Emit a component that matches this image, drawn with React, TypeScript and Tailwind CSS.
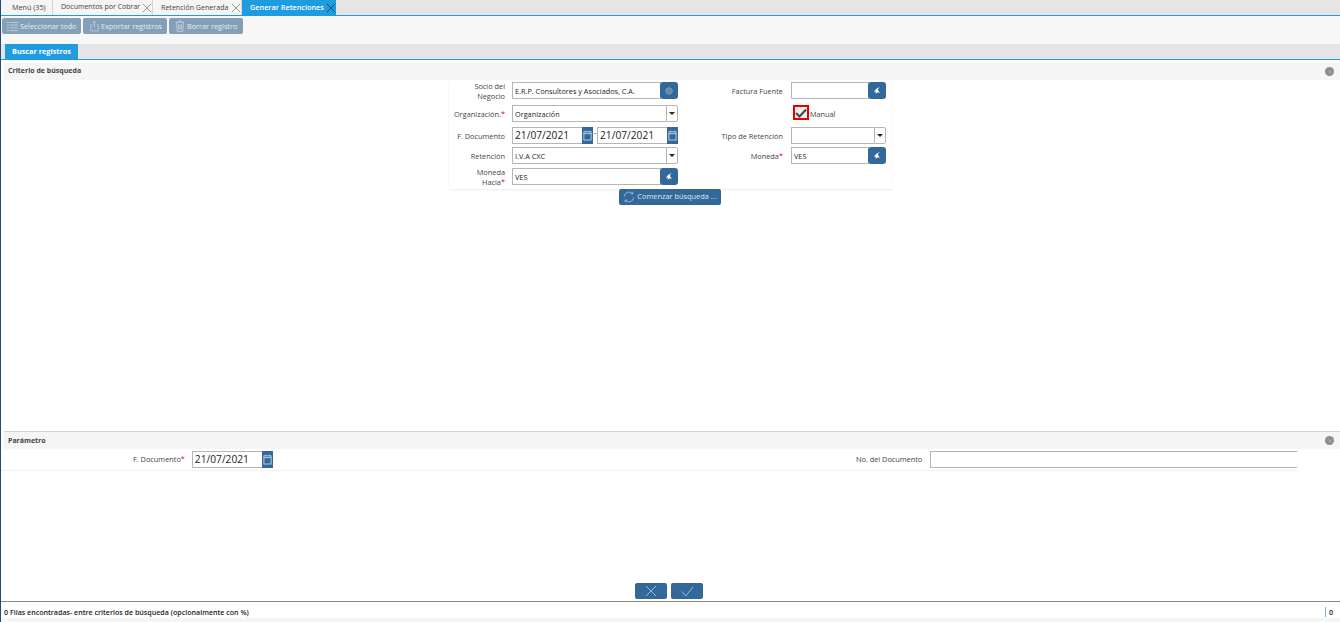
import { ReactNode } from "react";

const CloseIcon = ({ className = "" }: { className?: string }) => (
  <svg viewBox="0 0 12 12" className={className} fill="none" stroke="currentColor" strokeWidth="0.8">
    <path d="M1 1 L11 11 M11 1 L1 11" />
  </svg>
);

const ListIcon = () => (
  <svg viewBox="0 0 12 12" className="w-[11px] h-[11px] text-[#d6e0e9]" fill="none" stroke="currentColor" strokeWidth="0.8">
    <path d="M0 1.5h2M3 1.5h9M0 4.5h2M3 4.5h9M0 7.5h2M3 7.5h9M0 10.5h2M3 10.5h9" />
  </svg>
);

const ExportIcon = () => (
  <svg viewBox="0 0 12 14" className="w-[9px] h-[12px] text-[#d6e0e9]" fill="none" stroke="currentColor" strokeWidth="0.8">
    <path d="M3.5 5.5H1v8h10v-8H8.5M6 9V1M3.5 3.2L6 .8l2.5 2.4" />
  </svg>
);

const TrashIcon = () => (
  <svg viewBox="0 0 12 14" className="w-[10px] h-[12px] text-[#d6e0e9]" fill="none" stroke="currentColor" strokeWidth="0.8">
    <path d="M1 2.5h10M4.5 2.5V1h3v1.5M2 2.5l.6 11h6.8l.6-11M4.3 5v6.5M6 5v6.5M7.7 5v6.5" />
  </svg>
);

const CalendarIcon = () => (
  <svg viewBox="0 0 10 12" className="w-[9px] h-[11px] text-[#d5e0ea]" fill="none" stroke="currentColor" strokeWidth="0.9">
    <rect x="1" y="2" width="8" height="9" />
    <path d="M1 4h8M3 .5V2M7 .5V2" />
  </svg>
);

const ReplyIcon = () => (
  <svg viewBox="0 0 10 10" className="w-[9px] h-[9px] text-white" fill="currentColor">
    <path d="M8 .8C5 2 2.5 3.8 1 6.5L3 6.2 3 8.8C4 7.4 5.6 7 8 7.4 6.8 6.6 5.6 5.4 5.6 4 5.6 2.8 6.6 1.8 8 .8z" />
  </svg>
);

const SearchAtIcon = () => (
  <svg viewBox="0 0 10 10" className="w-[8px] h-[8px] text-[#b9cbdb]" fill="none" stroke="currentColor" strokeWidth="0.8">
    <circle cx="5" cy="5" r="4" />
    <circle cx="5" cy="5" r="1.8" />
  </svg>
);

const RefreshIcon = () => (
  <svg viewBox="0 0 14 14" className="w-[12px] h-[12px] text-[#c5d4e1]" fill="none" stroke="currentColor" strokeWidth="0.8">
    <path d="M1.5 6.5A5.5 5.5 0 0 1 11 3M12.5 7.5A5.5 5.5 0 0 1 3 11M11.5 .8V3.4H9M2.5 13.2V10.6H5" />
  </svg>
);

const Caret = () => (
  <span className="w-[12px] h-full border border-[#b5b5b5] bg-white rounded-r-[2px] flex items-center justify-center shrink-0">
    <span className="w-0 h-0 border-x-[3px] border-x-transparent border-t-[3px] border-t-[#222]" />
  </span>
);

const Label = ({ children, required }: { children: ReactNode; required?: boolean }) => (
  <div className="h-[17px] flex items-center justify-end">
    <div className="text-right text-[7.35px] leading-[10px] text-[#444]">
      {children}
      {required && <span className="text-[#e00] relative -top-[1px]">*</span>}
    </div>
  </div>
);

const boxClass =
  "h-full border border-[#b5b5b5] border-r-0 bg-white flex items-center pl-[2px] pt-[1px] text-[7.3px] text-[#222] min-w-0 whitespace-nowrap";

const Lookup = ({ value, width, icon }: { value: string; width: string; icon: ReactNode }) => (
  <div className={`flex h-[17px] ${width}`}>
    <div className={`${boxClass} flex-1`}>{value}</div>
    <button className="w-[18px] h-full bg-[#33699a] rounded-[3px] -ml-[1px] flex items-center justify-center shrink-0">
      {icon}
    </button>
  </div>
);

const Combo = ({ value, width }: { value: string; width: string }) => (
  <div className={`flex h-[17px] ${width}`}>
    <div className={`${boxClass} flex-1`}>{value}</div>
    <Caret />
  </div>
);

const DateBox = ({ width }: { width: string }) => (
  <div className={`flex h-[17px] ${width}`}>
    <div className="flex-1 h-full border border-[#b5b5b5] border-r-0 bg-white flex items-center pl-[2px] text-[10.2px] text-[#222]">
      21/07/2021
    </div>
    <button className="w-[11px] -ml-[1px] h-full bg-[#33699a] flex items-center justify-center shrink-0">
      <CalendarIcon />
    </button>
  </div>
);

const ToolButton = ({ icon, text, className }: { icon: ReactNode; text: string; className: string }) => (
  <button className={`h-[16px] ${className} bg-[#84a0b9] rounded-[2px] flex items-center gap-[2px] text-[7.3px] text-[#e6ecf1] whitespace-nowrap`}>
    {icon}
    {text}
  </button>
);

const SectionHeader = ({ title, textClass }: { title: string; textClass: string }) => (
  <div className="h-[17px] bg-[#f5f5f5] flex items-center justify-between pl-[4px] pr-[6px] text-[7px] font-bold text-[#444]">
    <span className={textClass}>{title}</span>
    <span className="w-[9px] h-[9px] rounded-full bg-[#8c8c8c] flex items-center justify-center">
      <CloseIcon className="w-[4px] h-[4px] text-white" />
    </span>
  </div>
);

const Tab = ({ text, className, closable }: { text: string; className: string; closable?: boolean }) => (
  <div className={`h-[15px] ${className} bg-[#f5f5f5] border-r border-[#d5d5d5] flex items-center justify-between text-[#444] whitespace-nowrap`}>
    {text}
    {closable && <CloseIcon className="w-[10px] h-[10px] text-[#666]" />}
  </div>
);

export default function App() {
  return (
    <div className="w-[1340px] h-[622px] bg-white flex flex-col overflow-hidden border-l border-[#1c4d7c] font-['Open_Sans',sans-serif]">
      {/* window tabs */}
      <div className="h-[16px] bg-[#e5e5e5] border-b border-[#1f9ce0] flex shrink-0">
        <Tab text="Menú (35)" className="w-[52px] pl-[11px] text-[7.2px]" />
        <Tab text="Documentos por Cobrar" className="w-[100px] pl-[8px] text-[7px]" closable />
        <Tab text="Retención Generada" className="w-[89px] pl-[8px] text-[7.1px]" closable />
        <div className="h-[15px] w-[94px] bg-[#1f9ce0] flex items-center justify-between pl-[8px] text-[7.3px] font-semibold text-white whitespace-nowrap">
          Generar Retenciones
          <CloseIcon className="w-[10px] h-[10px] text-[#123]" />
        </div>
      </div>

      {/* toolbar */}
      <div className="h-[28px] bg-[#f7f7f7] flex items-start gap-[2px] pt-[2px] pl-[1px] shrink-0">
        <ToolButton icon={<ListIcon />} text="Seleccionar todo" className="w-[79px] pl-[5px]" />
        <ToolButton icon={<ExportIcon />} text="Exportar registros" className="w-[84px] pl-[7px]" />
        <ToolButton icon={<TrashIcon />} text="Borrar registro" className="w-[74px] pl-[6px]" />
      </div>

      {/* panel tab */}
      <div className="h-[16px] bg-[#e5e5e5] border-b border-[#1f9ce0] pl-[4px] shrink-0">
        <div className="h-[15px] w-[73px] bg-[#1f9ce0] rounded-t-[1px] flex items-center justify-center text-[7.3px] font-bold text-white whitespace-nowrap">
          Buscar registros
        </div>
      </div>

      <div className="h-[3px] shrink-0" />
      <div className="pl-[3px] shrink-0">
        <SectionHeader title="Criterio de búsqueda" textClass="-mt-[1px]" />
      </div>

      {/* search form */}
      <div className="h-[351px] shrink-0 flex flex-col items-center">
        <div className="w-[443px] h-[109px] bg-white shadow-[0_1px_2px_rgba(0,0,0,0.08)] pt-[2px] grid grid-cols-[56px_166px_98px_95px] gap-x-[7px] grid-rows-[23px_22px_20px_21px_17px] items-start">
          <Label>Socio del<br />Negocio</Label>
          <Lookup value="E.R.P. Consultores y Asociados, C.A." width="w-[166px]" icon={<SearchAtIcon />} />
          <Label>Factura Fuente</Label>
          <div className="ml-px">
            <Lookup value="" width="w-[95px]" icon={<ReplyIcon />} />
          </div>

          <Label required>Organización.</Label>
          <Combo value="Organización" width="w-[166px]" />
          <div />
          <div className="flex items-start gap-[1px] pl-[3px] text-[7.3px] text-[#444]">
            <span className="w-[16px] h-[15px] border-2 border-[#e60000] bg-[#eee] flex items-center justify-center">
              <svg viewBox="0 0 12 10" className="w-[12px] h-[10px] text-[#444]" fill="none" stroke="currentColor" strokeWidth="2">
                <path d="M1 5l3.5 3.5L11 1.5" />
              </svg>
            </span>
            <span className="mt-[4px] leading-[10px]">Manual</span>
          </div>

          <Label>F. Documento</Label>
          <div className="flex items-center">
            <DateBox width="w-[81px]" />
            <span className="w-[4px] text-center text-[8px] leading-none -mt-[8px] text-[#222]">-</span>
            <DateBox width="w-[81px]" />
          </div>
          <Label>Tipo de Retención</Label>
          <div className="ml-px">
            <Combo value="" width="w-[95px]" />
          </div>

          <Label>Retención</Label>
          <Combo value="I.V.A CXC" width="w-[166px]" />
          <Label required>Moneda</Label>
          <div className="ml-px">
            <Lookup value="VES" width="w-[95px]" icon={<ReplyIcon />} />
          </div>

          <Label required>Moneda<br />Hacia</Label>
          <Lookup value="VES" width="w-[166px]" icon={<ReplyIcon />} />
          <div />
          <div />
        </div>
        <button className="-ml-[1px] w-[102px] h-[16px] bg-[#33699a] rounded-[2px] flex items-center justify-center gap-[2px] text-[7.4px] text-[#dfe7ee] whitespace-nowrap">
          <RefreshIcon />
          Comenzar búsqueda ...
        </button>
      </div>

      {/* parameters */}
      <div className="border-t border-[#d4d4cc] ml-[3px] shrink-0">
        <SectionHeader title="Parámetro" textClass="mt-[1px]" />
      </div>
      <div className="h-[21px] flex items-start pt-[2px] shrink-0 shadow-[0_1px_1px_rgba(0,0,0,0.05)] w-[1296px]">
        <div className="w-[184px] -mt-[1px]">
          <Label required>F. Documento</Label>
        </div>
        <div className="ml-[7px]">
          <DateBox width="w-[81px]" />
        </div>
        <div className="w-[650px] -mt-[1px]">
          <Label>No. del Documento</Label>
        </div>
        <div className="ml-[8px] w-[367px] h-[17px] border border-r-0 border-[#b5b5b5] bg-white" />
      </div>

      {/* actions */}
      <div className="flex-1 flex items-end justify-center gap-[4px] pb-[2px] pr-[3px]">
        <button className="w-[32px] h-[16px] bg-[#33699a] rounded-[2px] flex items-center justify-center">
          <CloseIcon className="w-[12px] h-[12px] text-[#b9cbdb]" />
        </button>
        <button className="w-[32px] h-[16px] bg-[#33699a] rounded-[2px] flex items-center justify-center">
          <svg viewBox="0 0 14 12" className="w-[13px] h-[11px] text-[#b9cbdb]" fill="none" stroke="currentColor" strokeWidth="0.9">
            <path d="M1 6l4 5L13 1" />
          </svg>
        </button>
      </div>

      {/* status bar */}
      <div className="h-[21px] border-t border-[#8f8f78] shrink-0 flex flex-col">
        <div className="h-[16px] pt-[4px] flex items-center justify-between pl-[3px] pr-[7px] text-[7.1px] font-semibold text-[#222] whitespace-nowrap">
          <span>0 Filas encontradas- entre criterios de búsqueda (opcionalmente con %)</span>
          <span className="border-l border-[#7ab4f0] pl-[3px] leading-[10px]">0</span>
        </div>
        <div className="flex-1 bg-[#f5f5f5]" />
      </div>
    </div>
  );
}
